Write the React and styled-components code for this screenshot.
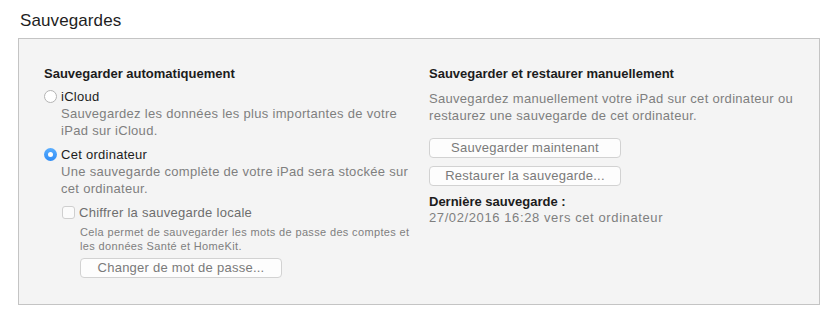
import React from "react";
import styled, { createGlobalStyle } from "styled-components";

const Global = createGlobalStyle`
  html, body { margin: 0; padding: 0; background: #ffffff; }
  body { font-family: "Liberation Sans", Arial, sans-serif; -webkit-font-smoothing: antialiased; }
`;

const Page = styled.div`
  width: 840px;
  height: 322px;
  padding: 10px 0 0 18px;
  box-sizing: border-box;
`;

const Title = styled.h1`
  margin: 0 0 6px 2px;
  font-size: 17px;
  font-weight: 400;
  line-height: 22px;
  letter-spacing: 0.1px;
  color: #1e1e1e;
`;

const Box = styled.section`
  width: 802px;
  height: 267px;
  box-sizing: border-box;
  border: 1px solid #c4c4c4;
  background: #f4f4f4;
  padding: 26px 20px 0 25px;
  display: grid;
  grid-template-columns: 385px 1fr;
`;

const Column = styled.div`
  display: flex;
  flex-direction: column;
  align-items: flex-start;
`;

const Heading = styled.div`
  font-size: 13px;
  font-weight: 700;
  line-height: 17px;
  color: #1c1c1c;
  margin-top: ${(p) => p.$mt || 0}px;
`;

const Desc = styled.div`
  font-size: 13px;
  line-height: ${(p) => p.$lh || 17}px;
  letter-spacing: ${(p) => p.$ls ?? 0.3}px;
  color: #7f7f7f;
  margin-top: ${(p) => p.$mt || 0}px;
  padding-left: ${(p) => p.$indent || 0}px;
`;

const SmallDesc = styled.div`
  font-size: 11px;
  line-height: 14px;
  letter-spacing: 0.35px;
  color: #7f7f7f;
  margin-top: ${(p) => p.$mt || 0}px;
  padding-left: 36px;
`;

const OptionRow = styled.label`
  display: flex;
  align-items: center;
  gap: 4px;
  font-size: 13px;
  line-height: 17px;
  letter-spacing: 0.27px;
  color: ${(p) => (p.$dim ? "#6e6e6e" : "#1c1c1c")};
  margin-top: ${(p) => p.$mt || 0}px;
  margin-left: ${(p) => p.$ml || 0}px;
`;

const Radio = styled.span`
  width: 13px;
  height: 13px;
  border-radius: 50%;
  box-sizing: border-box;
  border: ${(p) => (p.$on ? "none" : "1px solid #b4b4b4")};
  background: ${(p) => (p.$on ? "linear-gradient(#5aaeff, #2f8cf5)" : "#ffffff")};
  display: flex;
  align-items: center;
  justify-content: center;
  &::after {
    content: "";
    display: ${(p) => (p.$on ? "block" : "none")};
    width: 5px;
    height: 5px;
    border-radius: 50%;
    background: #ffffff;
  }
`;

const Checkbox = styled.span`
  width: 13px;
  height: 13px;
  box-sizing: border-box;
  border: 1px solid #cfcfcf;
  border-radius: 3px;
  background: #fbfbfb;
`;

const Button = styled.button`
  display: block;
  width: ${(p) => p.$w}px;
  height: 20px;
  margin-top: ${(p) => p.$mt || 0}px;
  margin-left: ${(p) => p.$ml || 0}px;
  padding: 0;
  box-sizing: border-box;
  border: 1px solid #d2d2d2;
  border-radius: 4px;
  background: #fdfdfd;
  font-family: "Liberation Sans", Arial, sans-serif;
  font-size: 13px;
  line-height: 18px;
  letter-spacing: 0.25px;
  color: #7a7a7a;
  text-align: center;
`;

const LastLabel = styled.div`
  font-size: 13px;
  font-weight: 700;
  line-height: 16px;
  color: #1c1c1c;
  margin-top: ${(p) => p.$mt || 0}px;
`;

export default function App() {
  return (
    <Page>
      <Global />
      <Title>Sauvegardes</Title>
      <Box>
        <Column>
          <Heading>Sauvegarder automatiquement</Heading>
          <OptionRow $mt={6}>
            <Radio />
            iCloud
          </OptionRow>
          <Desc $indent={17}>
            Sauvegardez les données les plus importantes de votre
            <br />
            iPad sur iCloud.
          </Desc>
          <OptionRow $mt={7}>
            <Radio $on />
            Cet ordinateur
          </OptionRow>
          <Desc $indent={17}>
            Une sauvegarde complète de votre iPad sera stockée sur
            <br />
            cet ordinateur.
          </Desc>
          <OptionRow $mt={7} $ml={18} $dim>
            <Checkbox />
            Chiffrer la sauvegarde locale
          </OptionRow>
          <SmallDesc $mt={4}>
            Cela permet de sauvegarder les mots de passe des comptes et
            <br />
            les données Santé et HomeKit.
          </SmallDesc>
          <Button $w={202} $ml={36} $mt={5}>
            Changer de mot de passe...
          </Button>
        </Column>
        <Column>
          <Heading>Sauvegarder et restaurer manuellement</Heading>
          <Desc $mt={8}>
            Sauvegardez manuellement votre iPad sur cet ordinateur ou
            <br />
            restaurez une sauvegarde de cet ordinateur.
          </Desc>
          <Button $w={192} $mt={14}>
            Sauvegarder maintenant
          </Button>
          <Button $w={192} $mt={8}>
            Restaurer la sauvegarde...
          </Button>
          <LastLabel $mt={8}>Dernière sauvegarde :</LastLabel>
          <Desc $lh={16} $ls={0.6}>27/02/2016 16:28 vers cet ordinateur</Desc>
        </Column>
      </Box>
    </Page>
  );
}
